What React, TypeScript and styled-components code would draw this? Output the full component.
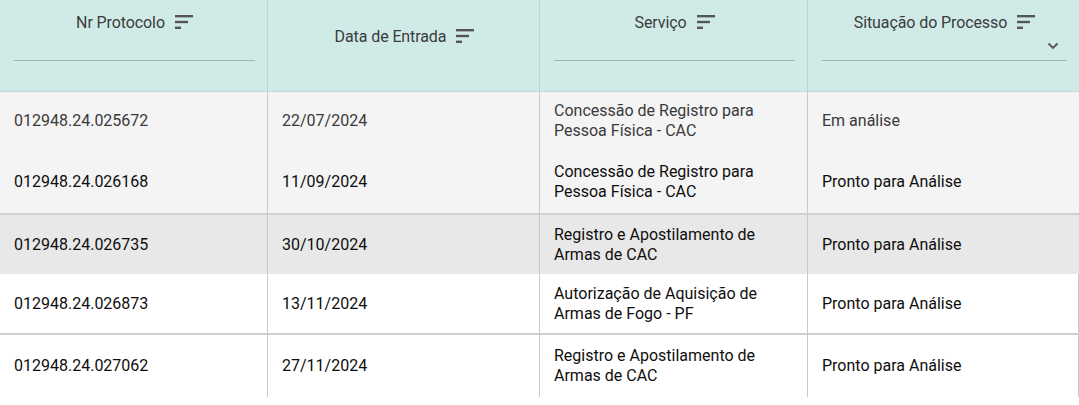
import { Fragment } from "react";
import styled, { createGlobalStyle } from "styled-components";

const GlobalStyle = createGlobalStyle`
  html, body {
    margin: 0;
    padding: 0;
    background: #ffffff;
    font-family: Roboto, "Liberation Sans", sans-serif;
  }
`;

const Table = styled.div`
  width: 1079px;
  display: grid;
  grid-template-columns: 268px 272px 268px 271px;
`;

const HeaderCell = styled.div<{ $last?: boolean }>`
  height: 92px;
  box-sizing: border-box;
  background: #d0ebe7;
  padding: 12px 12px 0 14px;
  border-right: ${(p) => (p.$last ? "none" : "1px solid #bcd3cf")};
  border-bottom: 1px solid #c3d8d4;
  display: flex;
  flex-direction: column;
`;

const HeaderTitle = styled.div<{ $low?: boolean }>`
  height: 20px;
  margin-top: ${(p) => (p.$low ? "14px" : "0")};
  display: flex;
  align-items: center;
  justify-content: center;
  gap: 10px;
  font-size: 16px;
  color: #3b3b3b;
  letter-spacing: -0.1px;
`;

const FilterBox = styled.div`
  height: 28px;
  display: flex;
  align-items: center;
  justify-content: flex-end;
  padding-right: 8px;
  border-bottom: 1px solid #9fb7b3;
`;

const Cell = styled.div<{ $bg: string; $faded?: boolean; $top?: boolean; $right?: boolean; $h: number }>`
  height: ${(p) => p.$h}px;
  box-sizing: border-box;
  background: ${(p) => p.$bg};
  padding: 0 14px;
  display: flex;
  align-items: center;
  font-size: 16px;
  line-height: 20px;
  color: ${(p) => (p.$faded ? "#3a3a3a" : "#0e0e0e")};
  border-top: ${(p) => (p.$top ? "2px solid #cfcfcf" : "none")};
  border-right: ${(p) => (p.$right ? "1px solid #c8c8c8" : "none")};
  &:not(:nth-child(4n)) {
    border-right: 1px solid #c8c8c8;
  }
`;

const SortIcon = () => (
  <svg width="18" height="14" viewBox="0 0 18 14">
    <rect x="0" y="0" width="18" height="2.4" fill="#555" />
    <rect x="0" y="5.8" width="13" height="2.4" fill="#555" />
    <rect x="0" y="11.6" width="6" height="2.4" fill="#555" />
  </svg>
);

const Chevron = () => (
  <svg width="12" height="8" viewBox="0 0 12 8">
    <path d="M1.5 1.5 L6 6 L10.5 1.5" stroke="#555" strokeWidth="1.8" fill="none" />
  </svg>
);

type Row = {
  protocolo: string;
  data: string;
  servico: string[];
  situacao: string;
  bg: string;
  h: number;
  top?: boolean;
  faded?: boolean;
  right?: boolean;
};

const rows: Row[] = [
  {
    protocolo: "012948.24.025672",
    data: "22/07/2024",
    servico: ["Concessão de Registro para", "Pessoa Física - CAC"],
    situacao: "Em análise",
    bg: "#f4f4f4",
    h: 58,
    faded: true,
  },
  {
    protocolo: "012948.24.026168",
    data: "11/09/2024",
    servico: ["Concessão de Registro para", "Pessoa Física - CAC"],
    situacao: "Pronto para Análise",
    bg: "#f4f4f4",
    h: 63,
  },
  {
    protocolo: "012948.24.026735",
    data: "30/10/2024",
    servico: ["Registro e Apostilamento de", "Armas de CAC"],
    situacao: "Pronto para Análise",
    bg: "#e8e8e8",
    h: 61,
    top: true,
  },
  {
    protocolo: "012948.24.026873",
    data: "13/11/2024",
    servico: ["Autorização de Aquisição de", "Armas de Fogo - PF"],
    situacao: "Pronto para Análise",
    bg: "#ffffff",
    h: 59,
    right: true,
  },
  {
    protocolo: "012948.24.027062",
    data: "27/11/2024",
    servico: ["Registro e Apostilamento de", "Armas de CAC"],
    situacao: "Pronto para Análise",
    bg: "#ffffff",
    h: 64,
    top: true,
    right: true,
  },
];

export default function App() {
  return (
    <>
      <GlobalStyle />
      <Table>
        <HeaderCell>
          <HeaderTitle>
            Nr Protocolo <SortIcon />
          </HeaderTitle>
          <FilterBox />
        </HeaderCell>
        <HeaderCell>
          <HeaderTitle $low>
            Data de Entrada <SortIcon />
          </HeaderTitle>
        </HeaderCell>
        <HeaderCell>
          <HeaderTitle>
            Serviço <SortIcon />
          </HeaderTitle>
          <FilterBox />
        </HeaderCell>
        <HeaderCell $last>
          <HeaderTitle>
            Situação do Processo <SortIcon />
          </HeaderTitle>
          <FilterBox>
            <Chevron />
          </FilterBox>
        </HeaderCell>

        {rows.map((r) => (
          <Fragment key={r.protocolo}>
            <Cell $bg={r.bg} $h={r.h} $top={r.top} $faded={r.faded}>
              {r.protocolo}
            </Cell>
            <Cell $bg={r.bg} $h={r.h} $top={r.top} $faded={r.faded}>
              {r.data}
            </Cell>
            <Cell $bg={r.bg} $h={r.h} $top={r.top} $faded={r.faded}>
              <div>
                {r.servico[0]}
                <br />
                {r.servico[1]}
              </div>
            </Cell>
            <Cell $bg={r.bg} $h={r.h} $top={r.top} $faded={r.faded} $right={r.right}>
              {r.situacao}
            </Cell>
          </Fragment>
        ))}
      </Table>
    </>
  );
}
